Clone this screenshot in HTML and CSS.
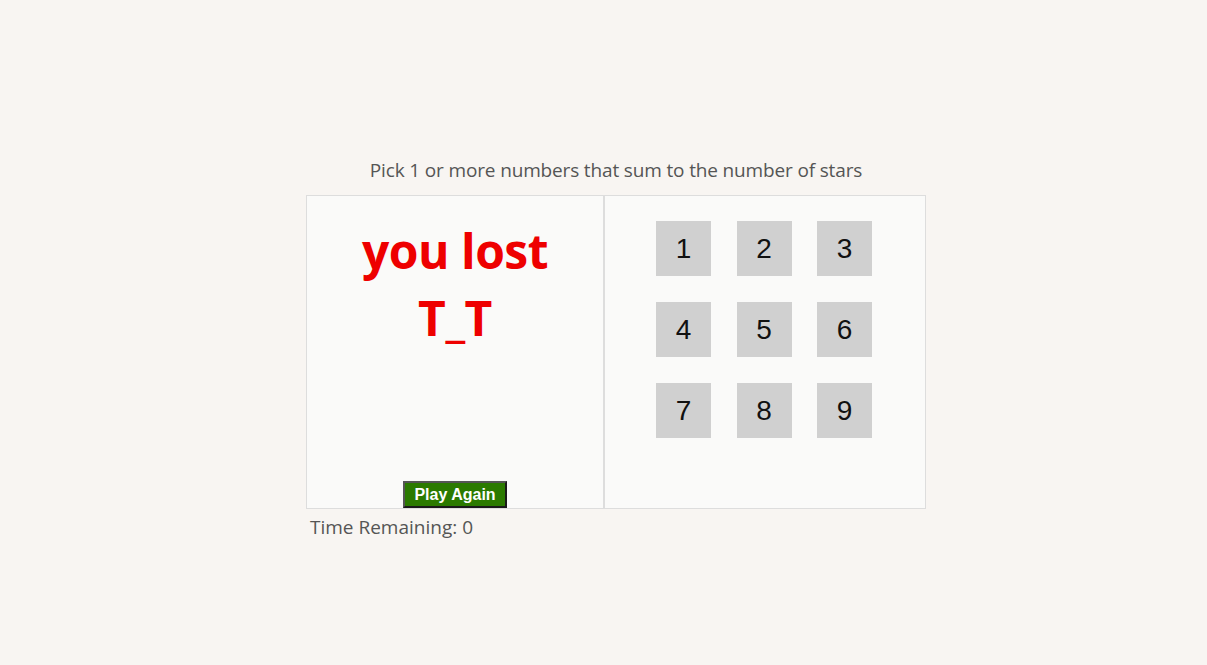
FILE: index.html
```html
<!DOCTYPE html>
<html>
<head>
<meta charset="utf-8">
<link rel="stylesheet" href="styles.css">
</head>
<body>
<div class="page">
  <div class="game">
    <div class="help">Pick 1 or more numbers that sum to the number of stars</div>
    <div class="body">
      <div class="left">
        <div class="status">you lost<br>T_T</div>
        <button class="again">Play Again</button>
      </div>
      <div class="right">
        <div class="grid">
          <button class="num">1</button>
          <button class="num">2</button>
          <button class="num">3</button>
          <button class="num">4</button>
          <button class="num">5</button>
          <button class="num">6</button>
          <button class="num">7</button>
          <button class="num">8</button>
          <button class="num">9</button>
        </div>
      </div>
    </div>
    <div class="timer">Time Remaining: 0</div>
  </div>
</div>
</body>
</html>
```

FILE: styles.css
```css
html, body {
  margin: 0;
  padding: 0;
  background: #f8f5f2;
  height: 100%;
}
.page {
  padding-top: 156px;
  padding-left: 306px;
  font-family: "Open Sans", "Noto Sans", sans-serif;
  color: #555;
}
.game {
  width: 620px;
}
.help {
  text-align: center;
  font-size: 19px;
  line-height: 28px;
  height: 39px;
  letter-spacing: -0.15px;
}
.body {
  display: flex;
  border: 1px solid #ddd;
  background: #fafaf9;
  height: 314px;
  box-sizing: border-box;
}
.left {
  width: 296px;
  border-right: 2px solid #ddd;
  display: flex;
  flex-direction: column;
  align-items: center;
  justify-content: space-between;
}
.status {
  color: #ee0000;
  font-weight: bold;
  font-size: 48px;
  line-height: 67px;
  text-align: center;
  margin-top: 21px;
  letter-spacing: -0.5px;
}
.again {
  font-family: "Liberation Sans", Arial, sans-serif;
  font-weight: bold;
  font-size: 16px;
  color: #fff;
  background: #2b7a00;
  border: 2px solid #1a1a1a;
  border-top-color: #555;
  border-left-color: #555;
  padding: 2px 8px;
  height: 27px;
  width: 104px;
  margin-bottom: 0;
}
.right {
  flex: 1;
  display: flex;
  justify-content: center;
}
.grid {
  display: grid;
  grid-template-columns: repeat(3, 55px);
  grid-auto-rows: 55px;
  column-gap: 25.5px;
  row-gap: 26px;
  margin-top: 25px;
  margin-right: 2px;
  align-self: flex-start;
}
.num {
  background: #d0d0d0;
  border: none;
  font-family: "Liberation Sans", Arial, sans-serif;
  font-size: 28px;
  color: #111;
  padding: 0;
}
.timer {
  font-size: 19px;
  line-height: 28px;
  padding-left: 4px;
  padding-top: 4px;
}
```
